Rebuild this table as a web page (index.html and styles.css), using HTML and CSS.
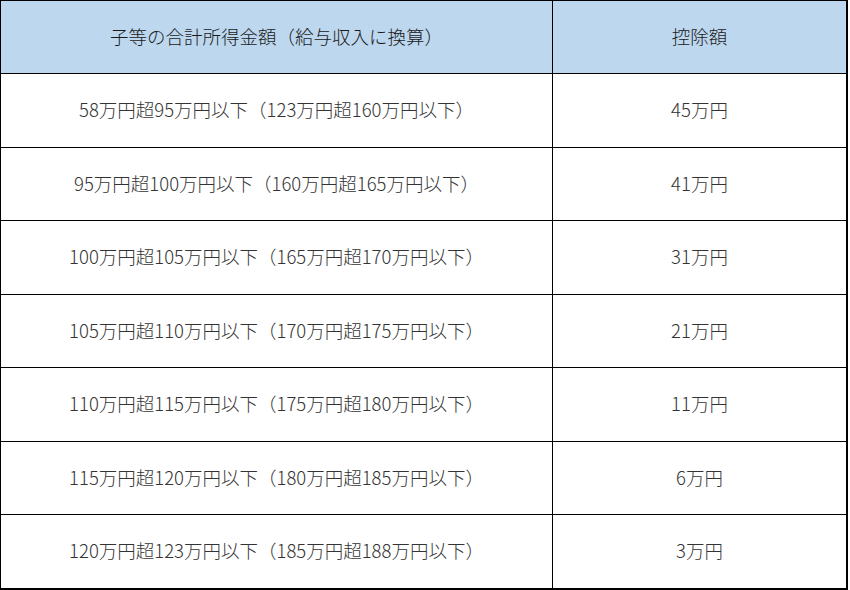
FILE: index.html
```html
<!DOCTYPE html>
<html lang="ja">
<head>
<meta charset="utf-8">
<link rel="stylesheet" href="styles.css">
</head>
<body>
<table class="tbl">
  <thead>
    <tr class="head">
      <th class="c1">子等の合計所得金額（給与収入に換算）</th>
      <th class="c2">控除額</th>
    </tr>
  </thead>
  <tbody>
    <tr><td>58万円超95万円以下（123万円超160万円以下）</td><td>45万円</td></tr>
    <tr><td>95万円超100万円以下（160万円超165万円以下）</td><td>41万円</td></tr>
    <tr><td>100万円超105万円以下（165万円超170万円以下）</td><td>31万円</td></tr>
    <tr><td>105万円超110万円以下（170万円超175万円以下）</td><td>21万円</td></tr>
    <tr><td>110万円超115万円以下（175万円超180万円以下）</td><td>11万円</td></tr>
    <tr><td>115万円超120万円以下（180万円超185万円以下）</td><td>6万円</td></tr>
    <tr><td>120万円超123万円以下（185万円超188万円以下）</td><td>3万円</td></tr>
  </tbody>
</table>
</body>
</html>
```
FILE: styles.css
```css
html, body {
  margin: 0;
  padding: 0;
  background: #ffffff;
}
.tbl {
  border-collapse: collapse;
  width: 848px;
  table-layout: fixed;
  font-family: "Noto Sans CJK JP", "Noto Sans", sans-serif;
  font-size: 18.5px;
  line-height: 26px;
  font-weight: 300;
  color: #333333;
  border-right: 2px solid #000;
  border-bottom: 2px solid #000;
}
.tbl th, .tbl td {
  border: 1px solid #000;
  text-align: center;
  vertical-align: middle;
  padding: 0 0 2px 0;
  height: 70px;
  font-weight: 300;
}
.tbl td {
  height: 70.5px;
}
.head th {
  background: #bdd7ee;
  color: #1a1a1a;
}
.c1 { width: 551px; }
.tbl td:last-child, .tbl th:last-child {
  border-right: 2px solid #000;
}
.tbl tbody tr:last-child td {
  border-bottom: 2px solid #000;
}
```
